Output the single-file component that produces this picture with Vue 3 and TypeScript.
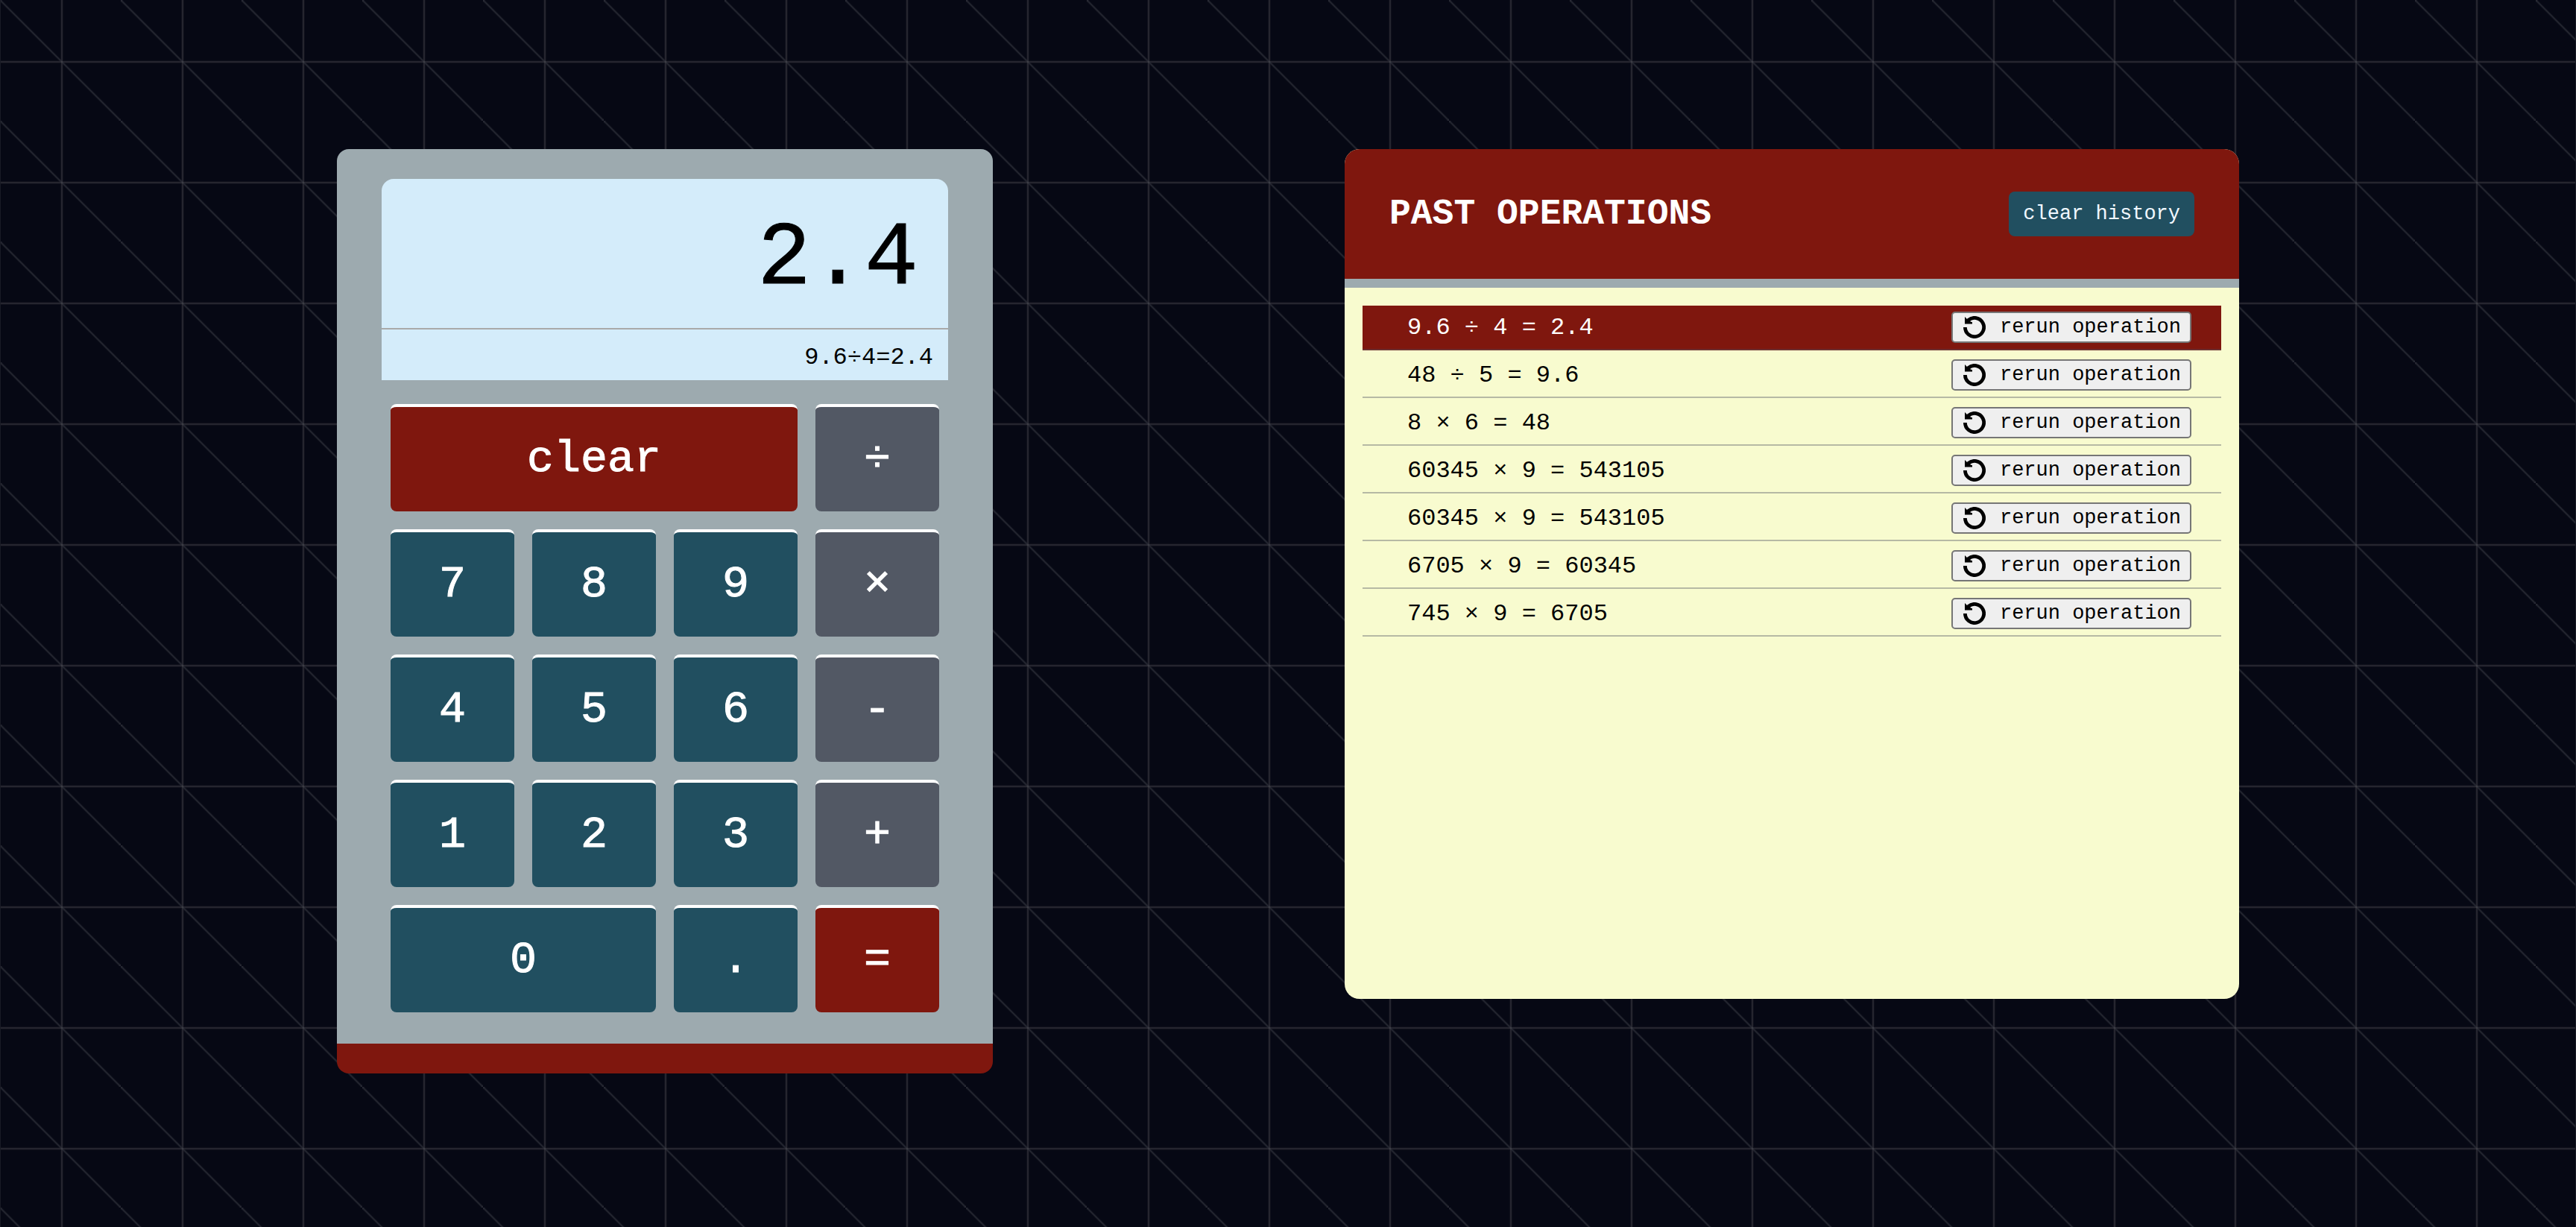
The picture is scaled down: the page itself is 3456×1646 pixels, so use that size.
<script setup lang="ts">
import { computed, ref } from 'vue'

interface Key {
  label: string
  kind: 'digit' | 'operator' | 'action'
  span?: number
}

interface Operation {
  left: string
  operator: string
  right: string
  result: string
}

const keys: Key[] = [
  { label: 'clear', kind: 'action', span: 3 },
  { label: '÷', kind: 'operator' },
  { label: '7', kind: 'digit' },
  { label: '8', kind: 'digit' },
  { label: '9', kind: 'digit' },
  { label: '×', kind: 'operator' },
  { label: '4', kind: 'digit' },
  { label: '5', kind: 'digit' },
  { label: '6', kind: 'digit' },
  { label: '-', kind: 'operator' },
  { label: '1', kind: 'digit' },
  { label: '2', kind: 'digit' },
  { label: '3', kind: 'digit' },
  { label: '+', kind: 'operator' },
  { label: '0', kind: 'digit', span: 2 },
  { label: '.', kind: 'digit' },
  { label: '=', kind: 'action' },
]

const history = ref<Operation[]>([
  { left: '9.6', operator: '÷', right: '4', result: '2.4' },
  { left: '48', operator: '÷', right: '5', result: '9.6' },
  { left: '8', operator: '×', right: '6', result: '48' },
  { left: '60345', operator: '×', right: '9', result: '543105' },
  { left: '60345', operator: '×', right: '9', result: '543105' },
  { left: '6705', operator: '×', right: '9', result: '60345' },
  { left: '745', operator: '×', right: '9', result: '6705' },
])

const left = ref('9.6')
const operator = ref('÷')
const right = ref('4')
const result = ref('2.4')

const expression = computed(() =>
  left.value + operator.value + right.value + (result.value ? '=' + result.value : ''),
)
const display = computed(() => result.value || right.value || left.value || '0')

function calculate(a: number, op: string, b: number): number {
  if (op === '÷') return a / b
  if (op === '×') return a * b
  if (op === '-') return a - b
  return a + b
}

function clear() {
  left.value = operator.value = right.value = result.value = ''
}

function equals() {
  if (!left.value || !operator.value || !right.value || result.value) return
  const value = calculate(Number(left.value), operator.value, Number(right.value))
  result.value = String(Number(value.toPrecision(10)))
  history.value.unshift({
    left: left.value,
    operator: operator.value,
    right: right.value,
    result: result.value,
  })
}

function press(key: Key) {
  if (key.label === 'clear') return clear()
  if (key.label === '=') return equals()
  if (key.kind === 'operator') {
    if (result.value) {
      const previous = result.value
      clear()
      left.value = previous
    }
    if (left.value && !right.value) operator.value = key.label
    return
  }
  if (result.value) clear()
  const target = operator.value ? right : left
  if (key.label === '.' && target.value.includes('.')) return
  target.value += key.label
}

function rerun(item: Operation) {
  left.value = item.left
  operator.value = item.operator
  right.value = item.right
  result.value = ''
  equals()
}
</script>

<template>
  <main class="page">
    <section class="calculator" aria-label="Calculator">
      <div class="screen">
        <output class="result">{{ display }}</output>
        <output class="expression">{{ expression }}</output>
      </div>
      <div class="keys">
        <button
          v-for="key in keys"
          :key="key.label"
          type="button"
          :class="['key', key.kind, key.span ? 'span-' + key.span : '']"
          @click="press(key)"
        >{{ key.label }}</button>
      </div>
    </section>

    <section class="history">
      <header class="history-header">
        <h2>PAST OPERATIONS</h2>
        <button type="button" class="clear-history" @click="history = []">clear history</button>
      </header>
      <ul class="operations">
        <li v-for="(item, index) in history" :key="index" :class="{ latest: index === 0 }">
          <span>{{ item.left }} {{ item.operator }} {{ item.right }} = {{ item.result }}</span>
          <button type="button" class="rerun" @click="rerun(item)">
            <svg viewBox="0 0 30 30" aria-hidden="true">
              <path d="M2.4 15A12.6 12.6 0 1 0 6.6 5.6" fill="none" stroke="#000" stroke-width="4.8" />
              <path d="M2 1L5 4L8 4.4L9.6 7.4L12 8.2V10.4H2Z" fill="#000" />
            </svg>
            rerun operation
          </button>
        </li>
      </ul>
    </section>
  </main>
</template>

<style>
body {
  margin: 0;
  background: #060814;
}
</style>

<style scoped>
* {
  box-sizing: border-box;
}

.page {
  --red: #7f170e;
  --teal: #214f60;
  --slate: #525864;
  --steel: #9daaaf;
  --line: #25252f;
  --edge: #0f101b;
  display: flex;
  flex-wrap: wrap;
  justify-content: space-evenly;
  align-items: flex-start;
  gap: 20px;
  min-height: 100vh;
  padding: 200px 0;
  font-family: "Liberation Mono", "Courier New", monospace;
  background-color: #060814;
  background-image:
    radial-gradient(circle at 0 0, #2a2c36 1px, transparent 3px),
    radial-gradient(circle at 100% 100%, #2a2c36 1px, transparent 3px),
    radial-gradient(circle at 83px 83px, #48484e 0, transparent 2px),
    linear-gradient(45deg, transparent calc(50% - 2px), #262832 50%, transparent calc(50% + 2px)),
    linear-gradient(to right, transparent 82px, var(--line) 82px, var(--line) 84px, transparent 84px),
    linear-gradient(to bottom, transparent 82px, var(--line) 82px, var(--line) 84px, transparent 84px),
    linear-gradient(to right, transparent 81px, var(--edge) 81px, var(--edge) 85px, transparent 85px),
    linear-gradient(to bottom, transparent 81px, var(--edge) 81px, var(--edge) 85px, transparent 85px);
  background-size: 162px 162px;
  box-shadow: inset 1px 0 #191b25, inset -1px 0 #191b25;
}

button {
  margin: 0;
  padding: 0;
  font-family: inherit;
  cursor: pointer;
}

.calculator {
  width: 880px;
  padding: 40px 60px;
  border-bottom: 40px solid var(--red);
  border-radius: 16px;
  background: var(--steel);
}

.screen {
  border-radius: 16px 16px 0 0;
  background: #d4ecfa;
  text-align: right;
}

.result,
.expression {
  display: block;
}

.result {
  padding: 16px 40px 0;
  border-bottom: 2px solid #a9a9a9;
  font-size: 120px;
  line-height: 184px;
  -webkit-text-stroke: 1px currentcolor;
}

.expression {
  padding: 8px 20px 0;
  font-size: 32px;
  line-height: 60px;
}

.keys {
  display: grid;
  grid-template-columns: repeat(4, 1fr);
  grid-auto-rows: 144px;
  gap: 24px;
  padding: 32px 12px 2px;
}

.key {
  padding-bottom: 1px;
  border: 0;
  border-top: 4px solid #fff;
  border-radius: 8px;
  color: #fff;
  font-size: 60px;
  -webkit-text-stroke: 1px currentcolor;
}

.digit {
  background: var(--teal);
}

.operator {
  background: var(--slate);
}

.action {
  background: var(--red);
}

.span-2 {
  grid-column: span 2;
}

.span-3 {
  grid-column: span 3;
}

.history {
  width: 1200px;
  min-height: 1140px;
  border-radius: 20px;
  background: #f8fbcf;
}

.history-header {
  display: flex;
  justify-content: space-between;
  align-items: center;
  height: 186px;
  padding: 0 60px;
  border-bottom: 12px solid var(--steel);
  border-radius: 20px 20px 0 0;
  background: var(--red);
  color: #fff;
}

h2 {
  margin: 0;
  font-size: 48px;
}

.clear-history {
  height: 60px;
  padding: 0 19px;
  border: 0;
  border-radius: 8px;
  background: var(--teal);
  color: #f0f8ff;
  font-size: 27px;
}

.operations {
  display: flex;
  flex-direction: column;
  gap: 4px;
  margin: 0;
  padding: 24px;
  list-style: none;
}

.operations li {
  display: flex;
  justify-content: space-between;
  align-items: center;
  height: 60px;
  padding: 0 40px 0 60px;
  border-bottom: 2px solid rgba(82, 88, 100, 0.4);
  color: #000;
  font-size: 32px;
}

.operations .latest {
  background: var(--red);
  color: #fff;
}

.rerun {
  display: flex;
  align-items: center;
  gap: 19px;
  height: 42px;
  padding: 0 12px 0 14px;
  border: 2px solid #767676;
  border-radius: 5px;
  background: #efefef;
  color: #000;
  font-size: 27px;
}

.rerun svg {
  width: 30px;
  height: 30px;
}
</style>
